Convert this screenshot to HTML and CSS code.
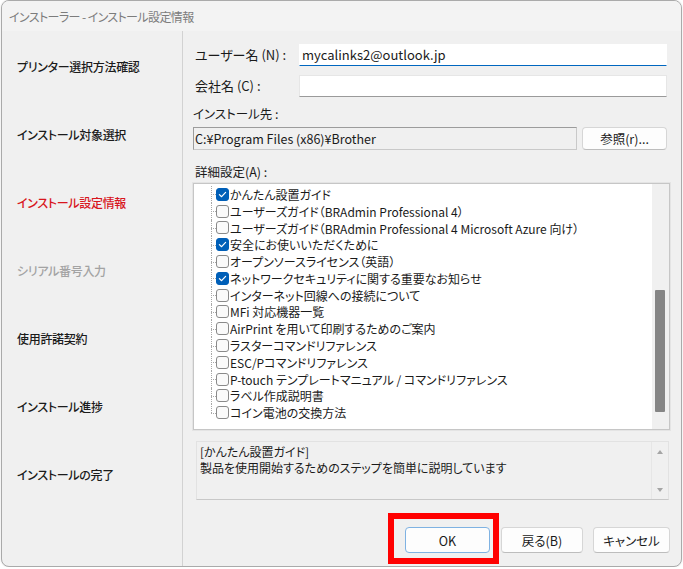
FILE: index.html
```html
<!DOCTYPE html>
<html lang="ja">
<head>
    <meta charset="UTF-8">
    <title>インストーラー - インストール設定情報</title>
    <link rel="stylesheet" href="styles.css">
</head>
<body>
    <svg width="0" height="0" class="defs">
        <defs>
            <symbol id="tick" viewBox="0 0 11 11">
                <polyline points="2.4,5.6 4.6,7.7 8.6,3.4" fill="none" stroke="white" stroke-width="1.2" stroke-linecap="round" stroke-linejoin="round"/>
            </symbol>
        </defs>
    </svg>

    <div class="window">
        <div class="titlebar">インストーラー - インストール設定情報</div>

        <div class="main">
            <nav class="steps">
                <div class="step">プリンター選択方法確認</div>
                <div class="step">インストール対象選択</div>
                <div class="step current">インストール設定情報</div>
                <div class="step disabled">シリアル番号入力</div>
                <div class="step">使用許諾契約</div>
                <div class="step">インストール進捗</div>
                <div class="step">インストールの完了</div>
            </nav>

            <section class="panel">
                <div class="form-grid">
                    <label class="label">ユーザー名 (N) :</label>
                    <div class="field focused">mycalinks2@outlook.jp</div>
                    <label class="label">会社名 (C) :</label>
                    <div class="field"></div>
                </div>

                <div class="caption">インストール先 :</div>
                <div class="path-row">
                    <div class="path">C:¥Program Files (x86)¥Brother</div>
                    <button class="btn browse">参照(r)...</button>
                </div>

                <div class="caption detail">詳細設定(A) :</div>
                <div class="tree">
                    <ul class="tree-list">
                        <li class="item"><span class="check on"><svg><use href="#tick"/></svg></span>かんたん設置ガイド</li>
                        <li class="item"><span class="check"></span>ユーザーズガイド（BRAdmin Professional 4）</li>
                        <li class="item"><span class="check"></span>ユーザーズガイド（BRAdmin Professional 4 Microsoft Azure 向け）</li>
                        <li class="item"><span class="check on"><svg><use href="#tick"/></svg></span>安全にお使いいただくために</li>
                        <li class="item"><span class="check"></span>オープンソースライセンス（英語）</li>
                        <li class="item"><span class="check on"><svg><use href="#tick"/></svg></span>ネットワークセキュリティに関する重要なお知らせ</li>
                        <li class="item"><span class="check"></span>インターネット回線への接続について</li>
                        <li class="item"><span class="check"></span>MFi 対応機器一覧</li>
                        <li class="item"><span class="check"></span>AirPrint を用いて印刷するためのご案内</li>
                        <li class="item"><span class="check"></span>ラスターコマンドリファレンス</li>
                        <li class="item"><span class="check"></span>ESC/Pコマンドリファレンス</li>
                        <li class="item"><span class="check"></span>P-touch テンプレートマニュアル / コマンドリファレンス</li>
                        <li class="item"><span class="check"></span>ラベル作成説明書</li>
                        <li class="item last"><span class="check"></span>コイン電池の交換方法</li>
                    </ul>
                    <div class="scrollbar"><div class="thumb"></div></div>
                </div>

                <div class="desc">
                    <div class="desc-text">
                        <div class="desc-line">[かんたん設置ガイド]</div>
                        <div class="desc-line">製品を使用開始するためのステップを簡単に説明しています</div>
                    </div>
                    <div class="desc-scroll">
                        <span class="arrow up"></span>
                        <span class="arrow down"></span>
                    </div>
                </div>

                <div class="buttons">
                    <span class="marked">
                        <button class="btn default ok">OK</button>
                    </span>
                    <button class="btn back">戻る(B)</button>
                    <button class="btn cancel">キャンセル</button>
                </div>
            </section>
        </div>
    </div>
</body>
</html>
```

FILE: styles.css
```css
* {
    margin: 0;
    padding: 0;
    box-sizing: border-box;
}

body {
    background-color: #ffffff;
    font-family: "Noto Sans CJK JP", "Noto Sans", sans-serif;
    font-feature-settings: "palt";
    color: #1a1a1a;
}

.defs {
    position: absolute;
}

.window {
    width: 681px;
    height: 567px;
    margin-left: 1px;
    border: 1px solid #aaaaaa;
    border-radius: 8px;
    background-color: #f0f0f0;
    overflow: hidden;
    display: flex;
    flex-direction: column;
    box-shadow: 0 0 2px rgba(0,0,0,0.15);
}

.titlebar {
    height: 30px;
    flex-shrink: 0;
    padding-left: 7px;
    display: flex;
    align-items: center;
    font-size: 12px;
    letter-spacing: -0.6px;
    color: #7c7c7c;
    background-color: #f3f3f3;
}

.main {
    flex: 1;
    display: flex;
}

/* left column: install steps */
.steps {
    width: 181px;
    flex-shrink: 0;
    border-right: 1px solid #d2d2d2;
    padding-top: 1px;
}

.step {
    height: 68px;
    display: flex;
    align-items: center;
    padding-left: 15px;
    font-size: 12px;
    letter-spacing: -0.3px;
    font-weight: 500;
    color: #1b1b1b;
}

.step.current {
    color: #d8161e;
}

.step.disabled {
    color: #a3a3a3;
}

/* right column */
.panel {
    flex: 1;
    padding: 13px 11px 0 10px;
    font-size: 13px;
}

.form-grid {
    display: grid;
    grid-template-columns: 104px 368px;
    row-gap: 9px;
    padding-left: 2px;
    align-items: center;
}

.label {
    line-height: 22px;
}

.field {
    height: 22px;
    background-color: #ffffff;
    border: 1px solid #e6e6e6;
    border-bottom-color: #9a9a9a;
    padding-left: 2px;
    line-height: 20px;
    font-size: 13px;
}

.field.focused {
    border-color: #ffffff;
    border-bottom: 1px solid #0067c0;
}

.caption {
    margin-top: 9px;
    line-height: 16px;
    font-size: 12.5px;
}

.caption.detail {
    margin-top: 14px;
    padding-left: 2px;
}

.path-row {
    display: flex;
    gap: 5px;
    margin-top: 5px;
    width: 474px;
}

.path {
    width: 384px;
    height: 23px;
    border: 1px solid #c9c9c9;
    border-top-color: #9c9c9c;
    border-left-color: #9c9c9c;
    padding-left: 1px;
    line-height: 21px;
    font-size: 12.5px;
}

.btn {
    font-family: inherit;
    font-feature-settings: "palt";
    font-size: 12.5px;
    color: #1a1a1a;
    background-color: #fdfdfd;
    border: 1px solid #d6d6d6;
    border-bottom-color: #bdbdbd;
    border-radius: 4px;
}

.browse {
    width: 85px;
    height: 23px;
}

/* tree of manuals */
.tree {
    margin-top: 3px;
    width: 477px;
    height: 247px;
    border: 1px solid #c6c6c6;
    box-shadow: 0 0 0 1px #e4e4e4;
    background-color: #ffffff;
    display: flex;
}

.tree-list {
    flex: 1;
    list-style: none;
    padding-top: 2px;
}

.item {
    position: relative;
    height: 16.8px;
    padding-left: 22px;
    display: flex;
    align-items: center;
    font-size: 12px;
    white-space: nowrap;
}

.item::before {
    content: "";
    position: absolute;
    left: 17px;
    top: 0;
    bottom: 0;
    border-left: 1px dotted #a8a8a8;
}

.item.last::before {
    bottom: 50%;
}

.item::after {
    content: "";
    position: absolute;
    left: 17px;
    top: 50%;
    width: 5px;
    border-top: 1px dotted #a8a8a8;
}

.check {
    width: 13px;
    height: 13px;
    flex-shrink: 0;
    margin-right: 1px;
    border: 1px solid #8a8a8a;
    border-radius: 3px;
    background-color: #fafafa;
    position: relative;
    z-index: 1;
}

.check svg {
    display: block;
    width: 11px;
    height: 11px;
}

.check.on {
    background-color: #005fb8;
    border-color: #005fb8;
}

.scrollbar {
    width: 17px;
    background-color: #f0f0f0;
    padding-top: 106px;
}

.thumb {
    width: 10px;
    height: 122px;
    margin-left: 3px;
    background-color: #858585;
    border-radius: 1px;
}

/* description */
.desc {
    margin: 11px 0 0 3px;
    width: 473px;
    height: 59px;
    border: 1px solid #e2e2e2;
    border-bottom-color: #c8c8c8;
    display: flex;
}

.desc-text {
    flex: 1;
    padding: 2px 0 0 3px;
    font-size: 12px;
}

.desc-line {
    line-height: 16px;
    height: 16px;
}

.desc-scroll {
    width: 17px;
    border-left: 1px solid #e6e6e6;
    display: flex;
    flex-direction: column;
    justify-content: space-between;
    align-items: center;
    padding: 8px 0 7px;
}

.arrow {
    width: 0;
    height: 0;
    border-left: 3.5px solid transparent;
    border-right: 3.5px solid transparent;
}

.arrow.up {
    border-bottom: 4px solid #a5a5a5;
}

.arrow.down {
    border-top: 4px solid #a5a5a5;
}

/* bottom buttons */
.buttons {
    margin-top: 27px;
    display: flex;
    justify-content: flex-end;
    gap: 10px;
}

.buttons .btn {
    height: 26px;
}

.marked {
    position: relative;
    display: flex;
    margin-right: 1px;
}

.marked::after {
    content: "";
    position: absolute;
    left: -17px;
    right: -9px;
    top: -14px;
    bottom: -11px;
    border: 6px solid #ff0000;
}

.ok {
    width: 85px;
    border-color: #7fb2e2;
}

.back {
    width: 82px;
}

.cancel {
    width: 77px;
}
```
